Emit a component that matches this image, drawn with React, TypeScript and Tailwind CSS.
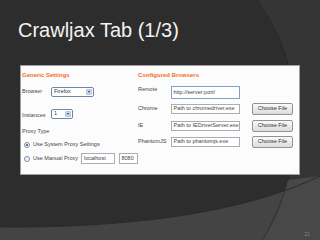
import React from "react";

const font = { fontFamily: '"Liberation Sans", Arial, sans-serif' };

function Select({ value, w }: { value: string; w: string }) {
  return (
    <div className={`flex items-stretch h-[10px] ${w} border border-[#6f87a5] rounded-[2px] bg-white`}>
      <div className="flex-1 flex items-center pl-[2px] text-[5.5px] text-[#333] leading-none whitespace-nowrap">{value}</div>
      <div className="w-[6px] my-[1px] mr-[1px] rounded-[1px] bg-[#c9d6ec] border border-[#b5c4de] flex items-center justify-center">
        <div className="w-0 h-0 border-l-[1.5px] border-r-[1.5px] border-t-[2px] border-l-transparent border-r-transparent border-t-[#2a3550]" />
      </div>
    </div>
  );
}

function Input({ value, w, h = "h-[10px]", focus = false }: { value: string; w: string; h?: string; focus?: boolean }) {
  return (
    <div
      className={`${w} ${h} shrink-0 flex items-center pl-[1.5px] bg-white text-[5.5px] leading-none text-[#444] whitespace-nowrap overflow-hidden border ${
        focus ? "border-[#7da2ce]" : "border-[#a9aeb5]"
      }`}
    >
      {value}
    </div>
  );
}

function Btn() {
  return (
    <div className="w-[41px] h-[12px] shrink-0 flex items-center justify-center rounded-[2px] border border-[#8e9399] bg-gradient-to-b from-[#fafafa] to-[#dcdcdc] text-[5.5px] leading-none text-[#333] whitespace-nowrap">
      Choose File
    </div>
  );
}

function Radio({ checked }: { checked?: boolean }) {
  return (
    <div className="w-[6px] h-[6px] shrink-0 rounded-full border border-[#7c8fa8] bg-gradient-to-br from-[#e6ebf2] to-[#ffffff] flex items-center justify-center">
      {checked && <div className="w-[2.5px] h-[2.5px] rounded-full bg-[#3a4a63]" />}
    </div>
  );
}

export default function App() {
  return (
    <div className="relative w-[320px] h-[240px] overflow-hidden bg-[#2d2d2d]" style={font}>
      <svg className="absolute inset-0" width="320" height="240" viewBox="0 0 320 240">
        <path d="M257,0 C300,60 315,150 263,240 L320,240 L320,0 Z" fill="#353535" />
        <path d="M0,227 C120,228 240,215 320,176 L320,240 L0,240 Z" fill="#444444" />
        <path d="M257,0 C300,60 315,150 263,240" fill="none" stroke="#262626" strokeWidth="1.2" opacity="0.7" />
        <path d="M288,180 C282,205 274,222 263,240 L320,240 L320,176 Z" fill="#484848" />
        <path d="M0,227 C120,228 240,215 320,176" fill="none" stroke="#2a2a2a" strokeWidth="1" />
      </svg>

      <div className="relative flex flex-col">
        <div className="pt-[20px] pl-[18px] text-[20px] leading-none text-[#f2f2f2] whitespace-nowrap">Crawljax Tab (1/3)</div>

        <div className="ml-[20px] mt-[25px] w-[280px] h-[110px] bg-[#fcfcfc] border border-[#a0a0a0] flex text-[#444] whitespace-nowrap">
          {/* left column */}
          <div className="w-[117px] shrink-0 pl-[1px] flex flex-col">
            <div className="mt-[5px] h-[8px] flex items-center text-[6px] font-bold text-[#f26f21] leading-none">Generic Settings</div>
            <div className="mt-[8px] h-[10px] flex items-center">
              <div className="w-[29px] text-[5.5px] leading-none">Browser</div>
              <Select value="Firefox" w="w-[43px]" />
            </div>
            <div className="mt-[12px] h-[10px] flex items-center">
              <div className="w-[29px] text-[5.5px] leading-none pt-[3px]">Instances</div>
              <Select value="1" w="w-[22px]" />
            </div>
            <div className="mt-[9px] h-[8px] flex items-center text-[5.5px] leading-none">Proxy Type</div>
            <div className="mt-[5px] h-[8px] flex items-center pl-[2px] gap-[3px] text-[5.5px] leading-none">
              <Radio checked />
              <span>Use System Proxy Settings</span>
            </div>
            <div className="mt-[4px] h-[11px] flex items-center pl-[2px] text-[5.5px] leading-none">
              <Radio />
              <span className="ml-[3px] w-[55px]">Use Manual Proxy</span>
              <Input value="localhost" w="w-[34px]" h="h-[11px]" />
              <div className="w-[4px]" />
              <Input value="8080" w="w-[19px]" h="h-[11px]" />
            </div>
          </div>

          {/* right column */}
          <div className="flex flex-col">
            <div className="mt-[5px] h-[8px] flex items-center text-[6px] font-bold text-[#f26f21] leading-none">Configured Browsers</div>
            <div className="mt-[7px] h-[13px] flex items-center">
              <div className="w-[33px] text-[5.5px] leading-none self-start pt-[1px]">Remote</div>
              <Input value="http://server:port/" w="w-[69px]" h="h-[13px]" focus />
            </div>
            <div className="mt-[4px] h-[12px] flex items-center">
              <div className="w-[33px] text-[5.5px] leading-none">Chrome</div>
              <Input value="Path to chromedriver.exe" w="w-[69px]" />
              <div className="w-[12px]" />
              <Btn />
            </div>
            <div className="mt-[5px] h-[12px] flex items-center">
              <div className="w-[33px] text-[5.5px] leading-none">IE</div>
              <Input value="Path to IEDriverServer.exe" w="w-[69px]" />
              <div className="w-[12px]" />
              <Btn />
            </div>
            <div className="mt-[4px] h-[12px] flex items-center">
              <div className="w-[33px] text-[5.5px] leading-none">PhantomJS</div>
              <Input value="Path to phantomjs.exe" w="w-[69px]" />
              <div className="w-[12px]" />
              <Btn />
            </div>
          </div>
        </div>
      </div>

      <div className="absolute right-[10px] bottom-[3px] text-[5px] leading-none text-[#8a8a8a]">21</div>
    </div>
  );
}
